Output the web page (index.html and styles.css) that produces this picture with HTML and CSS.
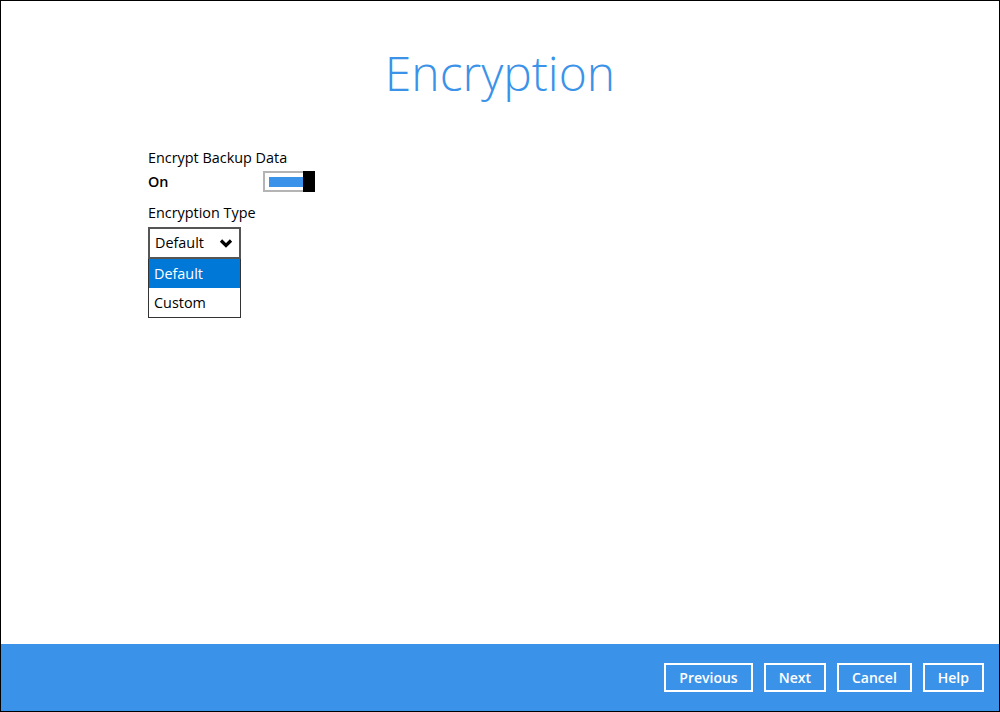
FILE: index.html
```html
<!DOCTYPE html>
<html>
<head>
    <title>Encryption</title>
    <link rel="stylesheet" href="styles.css">
</head>
<body>
    <div class="window">
        <div class="content">
            <h1 class="title">Encryption</h1>
            <div class="form">
                <div class="label">Encrypt Backup Data</div>
                <div class="toggle-row">
                    <span class="state">On</span>
                    <span class="toggle"><span class="toggle-bar"></span><span class="toggle-knob"></span></span>
                </div>
                <div class="label type-label">Encryption Type</div>
                <div class="select">
                    <span>Default</span>
                    <svg class="chevron" width="14" height="10" viewBox="0 0 14 10">
                        <path d="M2 2.5 L7 7.5 L12 2.5" fill="none" stroke="#000" stroke-width="3.2"/>
                    </svg>
                </div>
                <ul class="options">
                    <li class="option selected">Default</li>
                    <li class="option">Custom</li>
                </ul>
            </div>
        </div>
        <div class="footer">
            <button class="nav-button">Previous</button>
            <button class="nav-button">Next</button>
            <button class="nav-button">Cancel</button>
            <button class="nav-button">Help</button>
        </div>
    </div>
</body>
</html>
```

FILE: styles.css
```css
body {
    margin: 0;
    font-family: "Open Sans", "Noto Sans", sans-serif;
    color: #000000;
}
.window {
    width: 1000px;
    height: 712px;
    box-sizing: border-box;
    border: 1px solid #000000;
    display: flex;
    flex-direction: column;
    background-color: #FFFFFF;
}
.content {
    flex: 1;
}
.title {
    margin: 0;
    padding-top: 43px;
    text-align: center;
    font-size: 48px;
    font-weight: 300;
    line-height: 1.2;
    color: #3B93E9;
}
.form {
    padding: 46px 0 0 147px;
    font-size: 14.4px;
}
.label {
    line-height: 20px;
}
.toggle-row {
    display: flex;
    align-items: center;
    height: 26px;
    margin-top: 1px;
}
.state {
    font-weight: 600;
    width: 115px;
}
.toggle {
    display: flex;
    align-items: center;
    width: 52px;
    height: 21px;
    box-sizing: border-box;
    border: 2px solid #B4B4B4;
    border-right: none;
    padding-left: 4px;
}
.toggle-bar {
    width: 34px;
    height: 10px;
    background-color: #3B93E9;
}
.toggle-knob {
    width: 12px;
    height: 21px;
    margin-left: auto;
    background-color: #000000;
}
.type-label {
    margin-top: 8px;
}
.select {
    display: flex;
    align-items: center;
    justify-content: space-between;
    width: 93px;
    height: 32px;
    box-sizing: border-box;
    border: 2px solid #555555;
    padding: 0 6px 0 5px;
    margin-top: 4px;
}
.chevron {
    display: block;
}
.options {
    list-style-type: none;
    margin: 0;
    padding: 0;
    width: 93px;
    box-sizing: border-box;
    border: 1px solid #333333;
    border-top: none;
}
.option {
    height: 29px;
    line-height: 29px;
    padding-left: 5px;
}
.selected {
    background-color: #0078D7;
    color: #FFFFFF;
}
.footer {
    height: 67px;
    background-color: #3B93E9;
    display: flex;
    justify-content: flex-end;
    align-items: center;
    gap: 11px;
    padding-right: 15px;
}
.nav-button {
    height: 29px;
    padding: 0 13px;
    background-color: transparent;
    border: 2px solid #FFFFFF;
    color: #FFFFFF;
    font-family: "Open Sans", "Noto Sans", sans-serif;
    font-size: 14px;
    font-weight: 600;
}
```
